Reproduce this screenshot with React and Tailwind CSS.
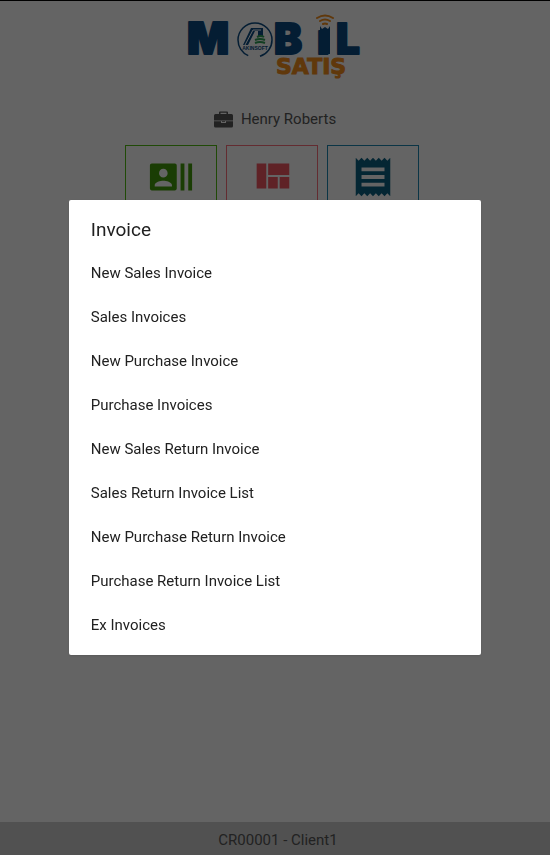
const INVOICE_ACTIONS = [
  "New Sales Invoice",
  "Sales Invoices",
  "New Purchase Invoice",
  "Purchase Invoices",
  "New Sales Return Invoice",
  "Sales Return Invoice List",
  "New Purchase Return Invoice",
  "Purchase Return Invoice List",
  "Ex Invoices",
];

const TILES = [
  {
    label: "Customers",
    className: "border-[#52b812] text-[#439a0a]",
    path: "M21 5v14h2V5h-2zm-4 14h2V5h-2v14zM14 5H2c-.55 0-1 .45-1 1v12c0 .55.45 1 1 1h12c.55 0 1-.45 1-1V6c0-.55-.45-1-1-1zM8 7.75c1.24 0 2.25 1.01 2.25 2.25S9.24 12.25 8 12.25 5.75 11.24 5.75 10 6.76 7.75 8 7.75zM12.5 17h-9v-.75c0-1.5 3-2.25 4.5-2.25s4.5.75 4.5 2.25V17z",
  },
  {
    label: "Stock",
    className: "border-[#f76f7b] text-[#ee5560]",
    path: "M10 18h5v-6h-5v6zm-6 0h5V5H4v13zm12 0h5v-6h-5v6zM10 5v6h11V5H10z",
  },
  {
    label: "Invoice",
    className: "border-[#1c86ae] text-[#0a5f80]",
    path: "M18 17H6v-2h12v2zm0-4H6v-2h12v2zm0-4H6V7h12v2zM3 22l1.5-1.5L6 22l1.5-1.5L9 22l1.5-1.5L12 22l1.5-1.5L15 22l1.5-1.5L18 22l1.5-1.5L21 22V2l-1.5 1.5L18 2l-1.5 1.5L15 2l-1.5 1.5L12 2l-1.5 1.5L9 2 7.5 3.5 6 2 4.5 3.5 3 2v20z",
  },
];

function Logo() {
  return (
    <svg
      viewBox="0 -8 190 78"
      className="h-[78px] w-[190px]"
      role="img"
      aria-label="Mobil Satış"
      fontFamily="Inter, sans-serif"
      fontWeight="900"
    >
      <g fill="#0b4a80" stroke="#0b4a80" strokeWidth="2" strokeLinejoin="round" fontSize="42">
        <text x="7" y="41" fontSize="44">M</text>
        <text x="94" y="41">B</text>
        <text x="137" y="41">ı</text>
        <text x="156" y="41">L</text>
        <path d="M140 13l2 3 3-2 3 2 2-3v28h-10z" stroke="none" />
      </g>
      {/* signal arcs stand in for the dot of the İ */}
      <g fill="none" stroke="#f08c1c" strokeWidth="2" strokeLinecap="round">
        <path d="M137 5q8-5 16 0" />
        <path d="M140 8q5-3 10 0" />
        <path d="M143 11q2-1 4 0" />
      </g>
      <circle cx="75" cy="27" r="17" fill="none" stroke="#0b4a80" strokeWidth="1.5" strokeDasharray="48 12 47 0" transform="rotate(-90 75 27)" />
      <path d="M63 32h5l7-14h3v14h5V15H71z" fill="#0b4a80" />
      <path d="M65 32l8-15h8" fill="none" stroke="#f9f9f9" strokeWidth="1" />
      <path d="M75 23h9v10h-9z" fill="#f9f9f9" />
      <path d="M77 24q4-2 7 0M75 27q5-2 10 0M75 30q5-2 10 0" fill="none" stroke="#2f9c55" strokeWidth="2" />
      <text x="75" y="37" textAnchor="middle" fontFamily="'Liberation Sans', sans-serif" fontSize="5" fill="#0b4a80">
        AKINSOFT
      </text>
      <text x="96" y="61" fontFamily="'DejaVu Sans', sans-serif" fontSize="22" fill="#f08c1c" stroke="#f08c1c" strokeWidth="1">
        SATIŞ
      </text>
    </svg>
  );
}

function BriefcaseIcon() {
  return (
    <svg viewBox="0 0 19 17" className="h-[17px] w-[19px]" fill="currentColor" aria-hidden="true">
      <path
        fillRule="evenodd"
        d="M5 3V1.500Q5 .5 6 .5h7q1 0 1 1V3h3.500Q19 3 19 4.500V9.500H0V4.500Q0 3 1.500 3zM6.500 3h6V1.800h-6z"
      />
      <path
        fillRule="evenodd"
        d="M0 10.200h19v4.800q0 1.500-1.500 1.500h-16Q0 16.500 0 15zM7 10.200v1.800h5v-1.800h-1v.8h-3v-.8z"
      />
    </svg>
  );
}

function InvoiceDialog() {
  return (
    <div className="fixed inset-0 flex items-center justify-center bg-black/60">
      <div
        role="dialog"
        aria-modal="true"
        aria-labelledby="dialog-title"
        className="w-3/4 rounded-xs bg-white pb-2 shadow-sm"
      >
        <h2 id="dialog-title" className="px-[22px] pt-4 pb-[7px] text-[19px] leading-7 text-[#212121]">
          Invoice
        </h2>
        <ul>
          {INVOICE_ACTIONS.map((action) => (
            <li key={action}>
              <button type="button" className="h-11 w-full px-[22px] text-left text-[15px] text-[#212121]">
                {action}
              </button>
            </li>
          ))}
        </ul>
      </div>
    </div>
  );
}

export default function App() {
  return (
    <div className="flex min-h-screen flex-col border-t border-black bg-[#f9f9f9] font-[Roboto,sans-serif]">
      <header className="flex flex-col items-center pt-1">
        <Logo />
        <div className="mt-6 flex items-center gap-2 text-[#555555]">
          <BriefcaseIcon />
          <span className="text-[15px] leading-6">Henry Roberts</span>
        </div>
      </header>
      <main className="mt-3.5 flex flex-1 justify-center gap-[9px] pr-1.5">
        {TILES.map((tile) => (
          <button
            key={tile.label}
            type="button"
            aria-label={tile.label}
            className={`flex h-24 w-[92px] justify-center border border-solid pt-2 ${tile.className}`}
          >
            <svg viewBox="0 0 24 24" className="size-[46px]" fill="currentColor" aria-hidden="true">
              <path d={tile.path} />
            </svg>
          </button>
        ))}
      </main>
      <footer className="bg-[#cacaca] pt-1.5 pb-0.5 pl-1.5 text-center text-[15px] leading-[25px] text-[#555555]">
        CR00001 - Client1
      </footer>
      <InvoiceDialog />
    </div>
  );
}
